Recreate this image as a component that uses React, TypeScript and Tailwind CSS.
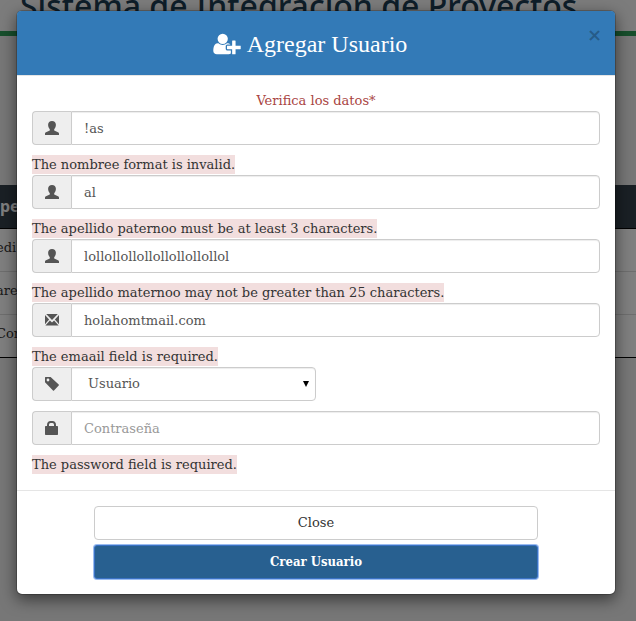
import type { ReactNode } from 'react';

const slab = "font-['DejaVu_Serif',serif]";

function UserIcon() {
  return (
    <svg viewBox="0 0 14 14" className="size-[14px] fill-current" aria-hidden="true">
      <path d="M7 0C9.4 0 10.9 1.4 10.9 3.8C10.9 5.6 10.2 7.2 9.2 8.2V9.4L13 11.2C13.8 11.6 14 12 14 12.8V14H0V12.8C0 12 .2 11.6 1 11.2L4.8 9.4V8.2C3.8 7.2 3.1 5.6 3.1 3.8C3.1 1.4 4.6 0 7 0Z" />
    </svg>
  );
}

function EnvelopeIcon() {
  return (
    <svg viewBox="0 0 14 14" className="size-[14px] fill-current" aria-hidden="true">
      <path d="M1.2 1H12.8L7 7ZM0 2L4.1 6.6L0 11.2ZM14 2V11.2L9.9 6.6ZM4.9 7.4L7 9.4L9.1 7.4L13.6 12.6H.4Z" />
    </svg>
  );
}

function TagIcon() {
  return (
    <svg viewBox="0 0 14 14" className="size-[14px] fill-current" aria-hidden="true">
      <path fillRule="evenodd" d="M.5 0H5.6L13.7 7.6Q14.2 8.1 13.7 8.6L9 13.5Q8.5 14 8 13.5L0 5.3V.5Q0 0 .5 0ZM3 1.6A1.4 1.4 0 1 0 3 4.4A1.4 1.4 0 1 0 3 1.6Z" />
    </svg>
  );
}

function LockIcon() {
  return (
    <svg viewBox="0 0 14 14" className="size-[14px] fill-current" aria-hidden="true">
      <path fillRule="evenodd" d="M2 5V4C2 1.6 3.5 0 5.5 0H7.5C9.5 0 11 1.6 11 4V5H12.3Q13 5 13 5.7V13.2Q13 14 12.3 14H.7Q0 14 0 13.2V5.7Q0 5 .7 5ZM4 5H9V4C9 2.8 8.4 2 7.4 2H5.6C4.6 2 4 2.8 4 4Z" />
    </svg>
  );
}

function UserPlusIcon() {
  return (
    <svg viewBox="0 0 2048 1792" className="h-6 w-7 fill-current" aria-hidden="true">
      <path d="M704 896q-159 0-271.5-112.5t-112.5-271.5 112.5-271.5 271.5-112.5 271.5 112.5 112.5 271.5-112.5 271.5-271.5 112.5zm960 128h352q13 0 22.5 9.5t9.5 22.5v192q0 13-9.5 22.5t-22.5 9.5h-352v352q0 13-9.5 22.5t-22.5 9.5h-192q-13 0-22.5-9.5t-9.5-22.5v-352h-352q-13 0-22.5-9.5t-9.5-22.5v-192q0-13 9.5-22.5t22.5-9.5h352v-352q0-13 9.5-22.5t22.5-9.5h192q13 0 22.5 9.5t9.5 22.5v352zm-736 224q0 52 38 90t90 38h256v238q-68 50-171 50h-874q-121 0-194-69t-73-190q0-53 3.5-103.5t14-109 26.5-108.5 43-97.5 62-81 85.5-53.5 111.5-20q19 0 39 17 79 61 154.5 91.5t164.5 30.5 164.5-30.5 154.5-91.5q20-17 39-17 132 0 217 96h-223q-52 0-90 38t-38 90v192z" />
    </svg>
  );
}

const control =
  'h-[34px] min-w-0 flex-1 rounded-r border border-[#ccc] bg-white text-[13px] text-[#555] shadow-[inset_0_1px_1px_rgba(0,0,0,0.075)] outline-none';

function Group({ id, icon, label, children }: { id: string; icon: ReactNode; label: string; children: ReactNode }) {
  return (
    <div className="flex">
      <label
        htmlFor={id}
        aria-label={label}
        className="flex h-[34px] w-[39px] shrink-0 items-center justify-center rounded-l border border-r-0 border-[#ccc] bg-[#eee] text-[#555]"
      >
        {icon}
      </label>
      {children}
    </div>
  );
}

function FieldError({ children }: { children: ReactNode }) {
  return (
    <p className="mt-[10px] flex h-5 items-start">
      <span className="h-[19px] bg-[#f2dede] leading-5">{children}</span>
    </p>
  );
}

const fields = [
  { id: 'nombre', label: 'Nombre', value: '!as', error: 'The nombree format is invalid.', icon: <UserIcon /> },
  { id: 'paterno', label: 'Apellido paterno', value: 'al', error: 'The apellido paternoo must be at least 3 characters.', icon: <UserIcon /> },
  { id: 'materno', label: 'Apellido materno', value: 'lollollollollollollollollol', error: 'The apellido maternoo may not be greater than 25 characters.', icon: <UserIcon /> },
  { id: 'email', label: 'Email', value: 'holahomtmail.com', error: 'The emaail field is required.', icon: <EnvelopeIcon /> },
];

function PageBehind() {
  return (
    <div className="absolute inset-0 overflow-hidden bg-[#eee]" aria-hidden="true">
      <header className="flex h-9 items-start border-b-[5px] border-[#2f9e58] bg-[#f8f8f8] pl-5">
        <h1 className="-mt-3 font-['Noto_Sans',sans-serif] text-[32px] leading-9 font-medium whitespace-nowrap text-[#1c3c52]">
          Sistema de Integración de Proyectos
        </h1>
      </header>
      <table className="mt-[149px] w-full border-collapse text-left text-[#333]">
        <thead>
          <tr className="h-[43px] border-b border-black bg-[#34404a]">
            <th className="p-0 font-['Noto_Sans',sans-serif] text-base font-bold text-white">pe</th>
          </tr>
        </thead>
        <tbody className="border-b border-black bg-white">
          {['edi', 'are', 'Con'].map((name) => (
            <tr key={name} className="h-[43px] border-t border-[#ddd]">
              <td className="p-0 pb-1">
                <span className="-ml-1 block">{name}</span>
              </td>
            </tr>
          ))}
        </tbody>
      </table>
      <div className="absolute inset-0 bg-black/50" />
    </div>
  );
}

export default function App() {
  return (
    <div className={`relative min-h-screen text-[13px] leading-5 text-[#333] ${slab}`}>
      <PageBehind />
      <main className="relative pt-[10px] pr-5 pb-6 pl-4">
        <form
          role="dialog"
          aria-labelledby="dialog-title"
          noValidate
          onSubmit={(e) => e.preventDefault()}
          className="rounded-md border border-black/20 bg-white bg-clip-padding shadow-[0_5px_15px_rgba(0,0,0,0.5)]"
        >
          <header className="relative flex h-[65px] items-center justify-center rounded-t border-b border-[#e5e5e5] bg-[#337ab7] pt-0.5 pr-3 text-white">
            <h2
              id="dialog-title"
              className="flex items-center gap-[6px] font-['Liberation_Serif',serif] text-2xl"
            >
              <UserPlusIcon />
              Agregar Usuario
            </h2>
            <button
              type="button"
              aria-label="Cerrar"
              className="absolute top-[13px] right-[13px] font-['DejaVu_Sans',sans-serif] text-lg leading-[21px] font-bold text-black/25"
            >
              ×
            </button>
          </header>

          <div className="p-[15px]">
            <p className="text-center text-[#a94442]">Verifica los datos*</p>
            {fields.map((f) => (
              <div key={f.id}>
                <Group id={f.id} icon={f.icon} label={f.label}>
                  <input id={f.id} type="text" defaultValue={f.value} className={`${control} px-3`} />
                </Group>
                <FieldError>{f.error}</FieldError>
              </div>
            ))}
            <div className="mb-[10px] w-1/2">
              <Group id="rol" icon={<TagIcon />} label="Rol">
                <div className="relative flex min-w-0 flex-1">
                  <select id="rol" className={`${control} appearance-none px-4`}>
                    <option>Usuario</option>
                  </select>
                  <svg viewBox="0 0 6 6" className="pointer-events-none absolute top-[14px] right-[7px] size-[6px] fill-black" aria-hidden="true">
                    <path d="M0 0H6L3 6Z" />
                  </svg>
                </div>
              </Group>
            </div>
            <Group id="password" icon={<LockIcon />} label="Contraseña">
              <input
                id="password"
                type="password"
                placeholder="Contraseña"
                className={`${control} px-3 placeholder:text-[#999]`}
              />
            </Group>
            <FieldError>The password field is required.</FieldError>
          </div>

          <footer className="flex flex-col gap-[5px] border-t border-[#e5e5e5] px-[77px] py-[15px]">
            <button type="button" className="h-[34px] rounded border border-[#ccc] bg-white text-[#333]">
              Close
            </button>
            <button
              type="submit"
              className="h-[34px] rounded-[3px] border border-[#3a72c4] bg-[#286090] font-['DejaVu_Serif_Condensed','DejaVu_Serif',serif] font-bold text-white ring-1 ring-[#9abcf0]"
            >
              Crear Usuario
            </button>
          </footer>
        </form>
      </main>
    </div>
  );
}
